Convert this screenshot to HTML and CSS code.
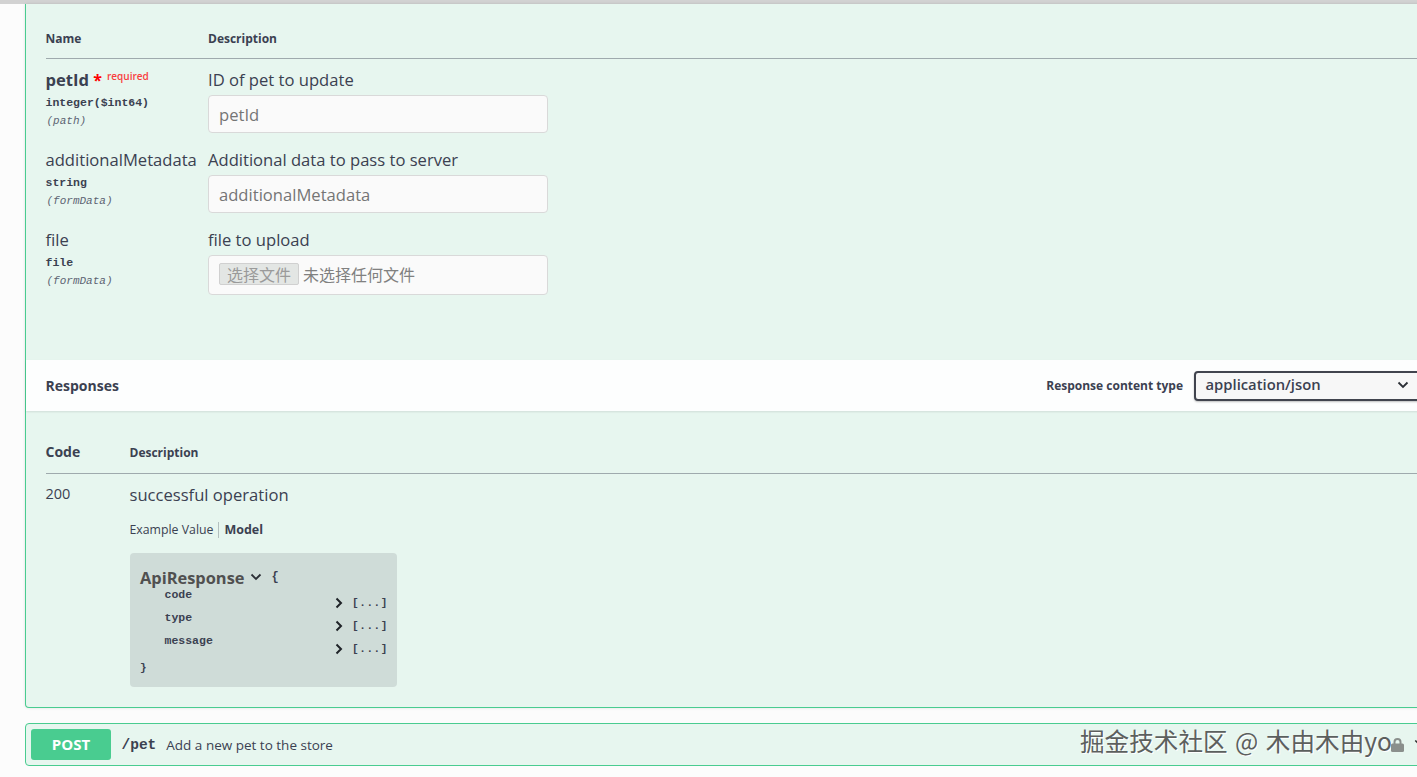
FILE: index.html
```html
<!DOCTYPE html>
<html lang="en">
<head>
<meta charset="utf-8">
<title>Swagger UI</title>
<link rel="stylesheet" href="styles.css">
</head>
<body>
<div class="topline"></div>
<main class="page">
  <section class="opblock open">
    <div class="params">
      <div class="params-head">
        <div class="col-name">Name</div>
        <div class="col-desc">Description</div>
      </div>
      <div class="param">
        <div class="col-name">
          <div class="pname strong">petId <span class="star">*</span><span class="req">required</span></div>
          <div class="ptype">integer<span class="fmt">($int64)</span></div>
          <div class="pin">(path)</div>
        </div>
        <div class="col-desc">
          <div class="pdesc">ID of pet to update</div>
          <div class="field ph">petId</div>
        </div>
      </div>
      <div class="param">
        <div class="col-name">
          <div class="pname">additionalMetadata</div>
          <div class="ptype">string</div>
          <div class="pin">(formData)</div>
        </div>
        <div class="col-desc">
          <div class="pdesc">Additional data to pass to server</div>
          <div class="field ph">additionalMetadata</div>
        </div>
      </div>
      <div class="param">
        <div class="col-name">
          <div class="pname">file</div>
          <div class="ptype">file</div>
          <div class="pin">(formData)</div>
        </div>
        <div class="col-desc">
          <div class="pdesc">file to upload</div>
          <div class="field file-field"><span class="file-btn">选择文件</span><span class="file-none">未选择任何文件</span></div>
        </div>
      </div>
    </div>
    <div class="resp-bar">
      <h4 class="resp-title">Responses</h4>
      <div class="resp-type">
        <span class="resp-label">Response content type</span>
        <div class="select">application/json
          <svg class="sel-arrow" width="12" height="8" viewBox="0 0 12 8"><path d="M1.5 1.5 6 6l4.5-4.5" fill="none" stroke="#2b2f36" stroke-width="1.8"/></svg>
        </div>
      </div>
    </div>
    <div class="responses">
      <div class="resp-head">
        <div class="code-col code-head">Code</div>
        <div class="desc-head">Description</div>
      </div>
      <div class="resp-row">
        <div class="code-col code-val">200</div>
        <div class="resp-body">
          <div class="resp-desc">successful operation</div>
          <div class="tabs"><span class="tab">Example Value</span><span class="tab active">Model</span></div>
          <div class="model">
            <div class="model-title"><span class="model-name">ApiResponse</span>
              <svg class="model-arrow" width="12" height="8" viewBox="0 0 12 8"><path d="M1.5 1.5 6 6l4.5-4.5" fill="none" stroke="#2b2f36" stroke-width="1.8"/></svg>
              <span class="brace">{</span>
            </div>
            <div class="prop"><span class="prop-name">code</span><span class="prop-val"><svg width="8" height="12" viewBox="0 0 8 12"><path d="M1.5 1.5 6 6l-4.5 4.5" fill="none" stroke="#1f2328" stroke-width="2"/></svg><span class="dots">[...]</span></span></div>
            <div class="prop"><span class="prop-name">type</span><span class="prop-val"><svg width="8" height="12" viewBox="0 0 8 12"><path d="M1.5 1.5 6 6l-4.5 4.5" fill="none" stroke="#1f2328" stroke-width="2"/></svg><span class="dots">[...]</span></span></div>
            <div class="prop"><span class="prop-name">message</span><span class="prop-val"><svg width="8" height="12" viewBox="0 0 8 12"><path d="M1.5 1.5 6 6l-4.5 4.5" fill="none" stroke="#1f2328" stroke-width="2"/></svg><span class="dots">[...]</span></span></div>
            <div class="brace end">}</div>
          </div>
        </div>
      </div>
    </div>
  </section>
  <section class="opblock summary">
    <span class="method">POST</span>
    <span class="path">/pet</span>
    <span class="sum-desc">Add a new pet to the store</span>
    <svg class="sum-arrow" width="10" height="7" viewBox="0 0 12 8"><path d="M1.5 1.5 6 6l4.5-4.5" fill="none" stroke="#333" stroke-width="1.8"/></svg>
  </section>
</main>
<div class="watermark">掘金技术社区 @ 木由木由yo<svg class="lock" width="15" height="15" viewBox="0 0 15 15"><path d="M4.5 7V5a3 3 0 0 1 6 0v2" fill="none" stroke="#8a8f8c" stroke-width="2"/><rect x="1" y="6.500" width="13" height="8.500" rx="1.500" fill="#8a8f8c"/></svg></div>
</body>
</html>
```
FILE: styles.css
```css
* { box-sizing: border-box; }
html, body { margin: 0; height: 777px; overflow: hidden; }
body {
  background: #fcfcfc;
  color: #3b4151;
  font-family: "Open Sans", "Noto Sans", sans-serif;
  position: relative;
}
.topline { height: 4px; background: #d2d2d2; }
.page { padding-left: 25px; width: 1440px; }
.opblock {
  background: #e7f6ef;
  border: 1px solid #49cc90;
}
.opblock.open {
  border-top: 0;
  border-radius: 0 0 4px 4px;
  height: 704px;
  box-shadow: 0 0 3px rgba(0,0,0,.12);
}
.params { padding: 20px 0 0 19.500px; height: 356px; }
.params-head {
  display: flex;
  height: 35px;
  border-bottom: 1px solid rgba(59,65,81,.42);
  font-size: 12px;
  font-weight: 700;
  line-height: 30px;
}
.col-name { width: 162.500px; flex: none; }
.col-desc { flex: 1; }
.param { display: flex; height: 80px; }
.params-head + .param { margin-top: 8px; }
.pname { font-size: 16.600px; line-height: 25px; height: 27px; white-space: nowrap; }
.pname.strong { font-weight: 700; }
.star { color: #f00; font-size: 16px; line-height: 0; }
.req { color: #f93e3e; font-size: 10px; font-weight: 600; vertical-align: 6px; margin-left: 5px; line-height: 0; }
.ptype, .pin, .prop-name, .path, .dots, .brace {
  font-family: "Liberation Mono", "DejaVu Sans Mono", monospace;
}
.ptype { font-size: 11.500px; font-weight: 700; line-height: 17px; color: #3b4151; }
.fmt { font-weight: 700; }
.pin { font-size: 11px; font-style: italic; line-height: 17px; margin-top: 2px; color: #5d6473; padding-left: 1px; }
.pdesc { font-size: 16.600px; line-height: 25px; margin-bottom: 3px; }
.field {
  width: 340px;
  height: 38px;
  background: #fafafa;
  border: 1px solid #d9d9d9;
  border-radius: 4px;
  font-size: 16.600px;
  line-height: 38px;
  padding-left: 10px;
}
.ph { color: #757575; }
.file-field {
  height: 40px;
  display: flex;
  align-items: center;
  padding-bottom: 2px;
  font-family: "Noto Sans CJK SC", "Open Sans", sans-serif;
  font-size: 16px;
  color: #808080;
}
.file-btn {
  width: 80px;
  height: 22px;
  line-height: 20px;
  text-align: center;
  background: #e3e6e4;
  border: 1px solid #d0d0d0;
  border-radius: 2px;
  color: #9a9a9a;
  margin-right: 4px;
}
.resp-bar {
  display: flex;
  justify-content: space-between;
  align-items: center;
  height: 51px;
  padding-left: 19.500px;
  background: #fdfefe;
  box-shadow: 0 1px 2px rgba(0,0,0,.1);
}
.resp-title { margin: 0; font-size: 14px; font-weight: 700; }
.resp-type { display: flex; align-items: center; gap: 11px; }
.resp-label { font-size: 12px; font-weight: 700; }
.select {
  width: 245px;
  height: 30px;
  border: 2px solid #41444e;
  border-radius: 4px;
  background: #f7f7f7;
  box-shadow: 0 1px 2px rgba(0,0,0,.25);
  font-size: 14.800px;
  font-weight: 600;
  line-height: 23px;
  padding-left: 9.500px;
  position: relative;
}
.sel-arrow { position: absolute; left: 201px; top: 8px; }
.responses { padding: 27px 0 0 19.500px; }
.resp-head {
  display: flex;
  height: 36px;
  align-items: flex-start;
  border-bottom: 1px solid rgba(59,65,81,.42);
}
.code-col { width: 84px; flex: none; }
.code-head { font-size: 14px; font-weight: 700; line-height: 28px; }
.desc-head { font-size: 12px; font-weight: 700; line-height: 30px; }
.resp-row { display: flex; margin-top: 8px; }
.code-val { font-size: 14.500px; line-height: 23px; }
.resp-desc { font-size: 16.600px; line-height: 25px; }
.tabs { display: flex; font-size: 12.300px; line-height: 16px; margin-top: 15px; }
.tab { padding-right: 5px; }
.tab.active { font-weight: 700; border-left: 1px solid rgba(59,65,81,.3); padding-left: 5px; font-size: 12.500px; }
.model {
  width: 267.500px;
  height: 134px;
  margin-top: 15px;
  padding: 14px 9px 0 10.500px;
  background: #cfdcd8;
  border-radius: 4px;
  color: #3b4151;
  position: relative;
}
.model-title { display: flex; align-items: center; height: 20px; }
.model-name { font-size: 16.400px; font-weight: 700; color: #505050; }
.model-arrow { margin-left: 6px; }
.brace { font-size: 12px; font-weight: 700; margin-left: 9px; }
.brace.end { margin-left: 0; line-height: 16px; font-size: 11px; }
.prop {
  display: flex;
  justify-content: space-between;
  height: 23px;
  padding-left: 24.500px;
  padding-right: 0;
}
.prop-name { font-size: 11.500px; font-weight: 700; line-height: 13px; margin-top: 1px; }
.prop-val { display: flex; align-items: center; gap: 9px; height: 14px; margin-top: 9px; }
.dots { font-size: 11px; font-weight: 700; letter-spacing: .6px; }
.model .prop + .brace.end { margin-top: 4px; }
.opblock.summary {
  margin-top: 15px;
  height: 43px;
  border-radius: 4px 0 0 4px;
  display: flex;
  align-items: center;
  padding-left: 5px;
  position: relative;
}
.method {
  width: 80px;
  height: 31px;
  background: #49cc90;
  border-radius: 3px;
  color: #fff;
  font-size: 15px;
  font-weight: 700;
  line-height: 31px;
  text-align: center;
}
.path { font-size: 14.500px; font-weight: 700; margin-left: 10.500px; }
.sum-desc { font-size: 13.500px; margin-left: 10px; }
.sum-arrow { position: absolute; left: 1388px; top: 15px; }
.watermark {
  position: absolute;
  left: 1080px;
  top: 723px;
  display: flex;
  align-items: center;
  font-family: "Noto Sans CJK SC", sans-serif;
  font-size: 24.600px;
  word-spacing: 2px;
  line-height: 34px;
  color: #5c5f5e;
  white-space: nowrap;
  text-shadow: 1px 1px 0 #fff;
}
.lock { margin-left: -2px; margin-top: 9px; }
```
